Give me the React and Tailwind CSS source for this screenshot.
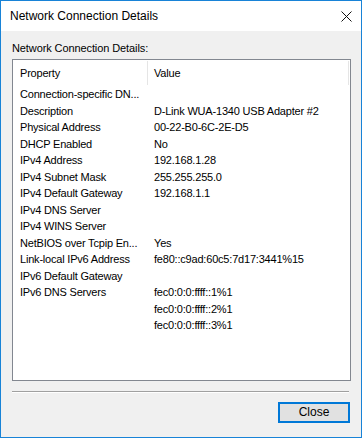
import React from 'react';

const rows = [
  ['Connection-specific DN...', ''],
  ['Description', 'D-Link WUA-1340 USB Adapter #2'],
  ['Physical Address', '00-22-B0-6C-2E-D5'],
  ['DHCP Enabled', 'No'],
  ['IPv4 Address', '192.168.1.28'],
  ['IPv4 Subnet Mask', '255.255.255.0'],
  ['IPv4 Default Gateway', '192.168.1.1'],
  ['IPv4 DNS Server', ''],
  ['IPv4 WINS Server', ''],
  ['NetBIOS over Tcpip En...', 'Yes'],
  ['Link-local IPv6 Address', 'fe80::c9ad:60c5:7d17:3441%15'],
  ['IPv6 Default Gateway', ''],
  ['IPv6 DNS Servers', 'fec0:0:0:ffff::1%1'],
  ['', 'fec0:0:0:ffff::2%1'],
  ['', 'fec0:0:0:ffff::3%1'],
];

export default function App() {
  return (
    <div className="w-[362px] h-[438px] border border-[#1883d7] bg-[#f0f0f0] flex flex-col font-['Liberation_Sans',Arial,sans-serif] text-black overflow-hidden">
      {/* title bar */}
      <div className="h-[30px] bg-white flex items-center justify-between pl-[9px] pr-[9px] shrink-0">
        <span className="text-[12px]">Network Connection Details</span>
        <svg width="11" height="11" viewBox="0 0 11 11">
          <path d="M0.5 0.5 L10.5 10.5 M10.5 0.5 L0.5 10.5" stroke="#111" strokeWidth="1" fill="none" />
        </svg>
      </div>

      <div className="flex flex-col px-[11px] pt-[11px] flex-1">
        <div className="text-[11px] tracking-[-0.1px] leading-[13px] h-[17px]">Network Connection Details:</div>

        {/* list view */}
        <div className="w-[339px] h-[322px] border border-[#828790] bg-white flex flex-col text-[11px] tracking-[-0.2px]">
          <div className="h-[26px] flex items-stretch shrink-0">
            <div className="w-[134px] pl-[7px] pt-[7px] leading-[13px]">Property</div>
            <div className="w-px bg-[#e5e5e5] mt-[1px] mb-[1px]" />
            <div className="flex-1 pl-[6px] pt-[7px] leading-[13px]">Value</div>
            <div className="w-px bg-[#e5e5e5] mt-[1px] mb-[1px] mr-px" />
          </div>
          <div className="flex flex-col">
            {rows.map(([k, v], i) => (
              <div key={i} className="h-[16.5px] grid grid-cols-[135px_1fr] items-center leading-[13px] pt-[1px]">
                <span className="pl-[7px] whitespace-nowrap">{k}</span>
                <span className="pl-[6px] whitespace-nowrap">{v}</span>
              </div>
            ))}
          </div>
        </div>

        <div className="w-[337px] mt-[10px] border-t border-[#a0a0a0] border-b border-b-white" />

        <div className="flex justify-end mt-[9px]">
          <button className="w-[72px] h-[21px] border-2 border-[#0078d7] bg-[#e1e1e1] text-[12px] leading-[15px] pb-px">
            Close
          </button>
        </div>
      </div>
    </div>
  );
}
